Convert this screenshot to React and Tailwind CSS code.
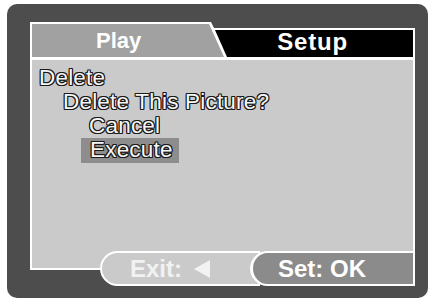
export default function App() {
  const outline =
    "[text-shadow:1px_0_#1a1a1a,-1px_0_#1a1a1a,0_1px_#1a1a1a,0_-1px_#1a1a1a,1px_1px_#1a1a1a,-1px_-1px_#1a1a1a,1px_-1px_#1a1a1a,-1px_1px_#1a1a1a]";
  const line = `h-[24px] leading-[24px] text-[22.5px] tracking-[0.2px] text-[#f6f6f6] whitespace-nowrap ${outline}`;
  return (
    <div className="w-[431px] h-[301px] bg-white pt-[4px] pl-[7px] font-['Liberation_Sans',Arial,sans-serif]">
      <div className="w-[421px] h-[294px] rounded-[10px] bg-[#4d4d4d] pt-[18px] pl-[23px] flex flex-col">
        <div className="w-[385px] flex flex-col">
          {/* Tabs */}
          <div className="relative h-[38px]">
            <svg className="absolute inset-0" width="385" height="38" viewBox="0 0 385 38">
              <polygon points="0,0 181,0 184,6 385,6 385,38 0,38" fill="#ffffff" />
              <polygon points="2,2 179,2 194,35 2,35" fill="#a1a1a1" />
              <polygon points="185,8 383,8 383,35 197,35" fill="#000000" />
            </svg>
            <div className="relative flex items-start h-full font-bold text-white">
              <span className="ml-[66px] mt-[8px] text-[22px] leading-[22px]">Play</span>
              <span className="ml-[136px] mt-[8px] text-[24px] leading-[24px] tracking-[0.8px]">Setup</span>
            </div>
          </div>
          {/* Content */}
          <div className="h-[210px] bg-[#cacaca] border-x-2 border-b-2 border-white pt-[6px] pl-[7px] flex flex-col">
            <div className={line}>Delete</div>
            <div className={`${line} pl-[24px]`}>Delete This Picture?</div>
            <div className={`${line} pl-[50px]`}>Cancel</div>
            <div className="pl-[42px]">
              <div className={`${line} h-[25px] inline-block bg-[#8d8d8d] pl-[9px] pr-[6px]`}>Execute</div>
            </div>
          </div>
          {/* Bottom pills */}
          <div className="relative flex -mt-[19px] h-[35px] ml-[70px]">
            <div className="w-[160px] h-full rounded-l-full border-2 border-r-0 border-white bg-[#cacaca] flex items-center pl-[28px] text-[#f2f2f2] font-bold text-[24px]">
              <span>Exit:</span>
              <svg className="ml-[12px]" width="16" height="18" viewBox="0 0 16 18">
                <polygon points="16,0 16,18 0,9" fill="#f2f2f2" />
              </svg>
            </div>
            <div className="-ml-[10px] w-[165px] h-full rounded-l-full border-2 border-l-[3px] border-white bg-[#8b8b8b] flex items-center pl-[25px] text-white font-bold text-[24px]">
              <span>Set: OK</span>
            </div>
          </div>
        </div>
      </div>
    </div>
  );
}
